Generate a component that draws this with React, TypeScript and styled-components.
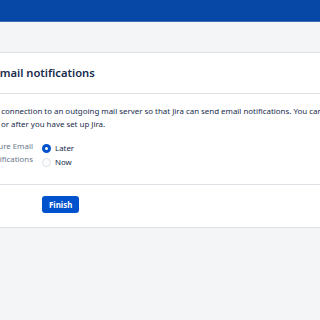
import { useState } from 'react'
import styled, { createGlobalStyle } from 'styled-components'

const GlobalStyle = createGlobalStyle`
  html, body {
    margin: 0;
    padding: 0;
    background: #f4f5f7;
    overflow: hidden;
    font-family: "Noto Sans", "Liberation Sans", sans-serif;
    color: #172b4d;
  }
`

const Header = styled.div`
  height: 22px;
  background: #0747a6;
  border-bottom: 1px solid #3d6cb5;
  box-sizing: border-box;
`

const Band = styled.div`
  height: 30px;
`

const Panel = styled.div`
  background: #fff;
  border-top: 1px solid #dfe1e6;
  border-bottom: 1px solid #dfe1e6;
  margin-left: -44px;
  width: 640px;
`

const PanelHead = styled.div`
  padding: 10px 0;
  border-bottom: 1px solid #dfe1e6;
`

const Title = styled.h2`
  margin: 0;
  font-size: 11.2px;
  line-height: 20px;
  font-weight: 600;
  color: #172b4d;
`

const Section = styled.div`
  padding: 11px 0 15px;
  border-bottom: 1px solid #dfe1e6;
`

const Intro = styled.p`
  margin: 0 0 9px;
  width: 373px;
  font-size: 7.9px;
  line-height: 13px;
`

const FieldRow = styled.div`
  display: grid;
  grid-template-columns: 77px auto;
  column-gap: 9px;
`

const FieldLabel = styled.div`
  text-align: right;
  font-size: 7.9px;
  line-height: 13px;
  color: #6b778c;
`

const Options = styled.div`
  display: flex;
  flex-direction: column;
  padding-top: 1px;
`

const Option = styled.label`
  display: flex;
  align-items: center;
  gap: 4px;
  height: 14px;
  font-size: 7.9px;
  color: #172b4d;
  cursor: pointer;
`

const Radio = styled.span<{ $on: boolean }>`
  width: 9px;
  height: 9px;
  box-sizing: border-box;
  border-radius: 50%;
  background: ${p => (p.$on ? '#0052cc' : '#fafbfc')};
  border: ${p => (p.$on ? 'none' : '1px solid #dfe1e6')};
  display: flex;
  align-items: center;
  justify-content: center;
  &::after {
    content: '';
    width: 3px;
    height: 3px;
    border-radius: 50%;
    background: ${p => (p.$on ? '#fff' : 'transparent')};
  }
`

const Actions = styled.div`
  display: flex;
  padding: 11px 0 14px 86px;
`

const FinishButton = styled.button`
  height: 17px;
  padding: 0 7px;
  border: none;
  border-radius: 3px;
  background: #0052cc;
  color: #fff;
  font-family: inherit;
  font-size: 7.9px;
  font-weight: 700;
  cursor: pointer;
`

const App = () => {
  const [choice, setChoice] = useState<'later' | 'now'>('later')

  return (
    <>
      <GlobalStyle />
      <Header />
      <Band />
      <Panel>
        <PanelHead>
          <Title>Set up email notifications</Title>
        </PanelHead>
        <Section>
          <Intro>
            Configure a connection to an outgoing mail server so that Jira can send email notifications. You can do this now or after you have set up Jira.
          </Intro>
          <FieldRow>
            <FieldLabel>Configure Email Notifications</FieldLabel>
            <Options>
              {[{ key: 'later', text: 'Later' }, { key: 'now', text: 'Now' }].map((o) => (
                <Option key={o.key} onClick={() => setChoice(o.key as 'later' | 'now')}>
                  <Radio $on={choice === o.key} />
                  {o.text}
                </Option>
              ))}
            </Options>
          </FieldRow>
        </Section>
        <Actions>
          <FinishButton type="button">Finish</FinishButton>
        </Actions>
      </Panel>
    </>
  )
}

export default App
